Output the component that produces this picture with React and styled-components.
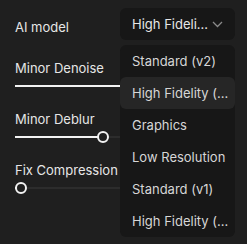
import styled, { createGlobalStyle } from "styled-components";

const GlobalStyle = createGlobalStyle`
  body {
    margin: 0;
    background: #1f1f1f;
    font-family: Inter, "Noto Sans", sans-serif;
  }
`;

const Panel = styled.div`
  position: relative;
  width: 247px;
  height: 244px;
  padding: 8px 12px 0 15px;
  box-sizing: border-box;
  display: flex;
  flex-direction: column;
  gap: 19px;
`;

const TopRow = styled.div`
  display: flex;
  align-items: center;
  justify-content: space-between;
  height: 32px;
  margin-bottom: 1px;
`;

const Label = styled.div`
  color: #e6e6e6;
  font-size: 13px;
  line-height: 16px;
  padding-top: ${(p) => p.$offset || 0}px;
`;

const Section = styled.div`
  display: flex;
  flex-direction: column;
  gap: 4px;
`;

const Slider = styled.div`
  position: relative;
  height: 12px;
  display: flex;
  align-items: center;
`;

const Track = styled.div`
  width: 100%;
  height: 2px;
  background: #2c2c2c;
`;

const Fill = styled.div`
  position: absolute;
  left: 0;
  top: 5px;
  height: 2px;
  background: #f2f2f2;
`;

const Thumb = styled.div`
  position: absolute;
  top: 0;
  width: 12px;
  height: 12px;
  margin-left: -6px;
  border: 2px solid #f2f2f2;
  border-radius: 50%;
  background: #1f1f1f;
  box-sizing: border-box;
`;

const Select = styled.div`
  width: 115px;
  height: 32px;
  background: #171717;
  border-radius: 6px;
  display: flex;
  align-items: center;
  justify-content: space-between;
  padding: 0 12px;
  box-sizing: border-box;
  color: #e6e6e6;
  font-size: 13px;
`;

const Menu = styled.div`
  position: absolute;
  top: 45px;
  left: 120px;
  width: 115px;
  background: #171717;
  border-radius: 6px;
  overflow: hidden;
`;

const Item = styled.div`
  height: 32px;
  display: flex;
  align-items: center;
  padding: 0 12px;
  border-radius: 6px;
  color: #d6d6d6;
  font-size: 13px;
  white-space: nowrap;
  background: ${(p) => (p.$active ? "#262626" : "transparent")};
`;

const Chevron = () => (
  <svg width="11" height="7" viewBox="0 0 11 7" fill="none">
    <path d="M1 1l4.5 4.5L10 1" stroke="#8a8a8a" strokeWidth="1.3" />
  </svg>
);

function Range({ value, hideThumb }) {
  return (
    <Slider>
      <Track />
      <Fill style={{ width: `${value}%` }} />
      {!hideThumb && <Thumb style={{ left: `${value}%` }} />}
    </Slider>
  );
}

const options = [
  "Standard (v2)",
  "High Fidelity (...",
  "Graphics",
  "Low Resolution",
  "Standard (v1)",
  "High Fidelity (...",
];

export default function App() {
  return (
    <>
      <GlobalStyle />
      <Panel>
        <TopRow>
          <Label $offset={6}>AI model</Label>
          <Select>
            <span>High Fideli...</span>
            <Chevron />
          </Select>
        </TopRow>
        <Section>
          <Label>Minor Denoise</Label>
          <Range value={100} hideThumb />
        </Section>
        <Section>
          <Label>Minor Deblur</Label>
          <Range value={40} />
        </Section>
        <Section>
          <Label>Fix Compression</Label>
          <Range value={2.7} />
        </Section>
        <Menu>
          {options.map((o, i) => (
            <Item key={i} $active={i === 1}>
              {o}
            </Item>
          ))}
        </Menu>
      </Panel>
    </>
  );
}
